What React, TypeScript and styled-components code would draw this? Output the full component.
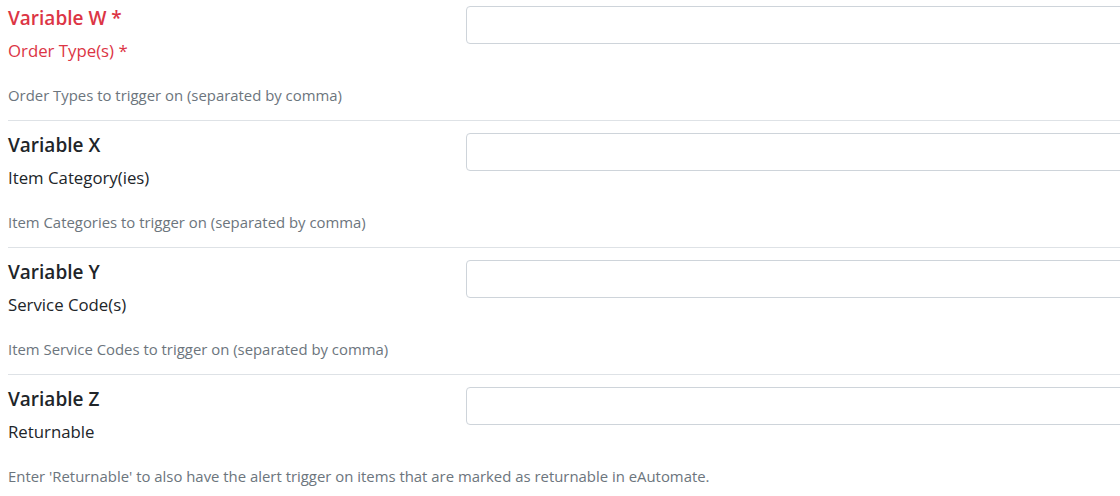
import React from "react";
import styled, { createGlobalStyle } from "styled-components";

const Global = createGlobalStyle`
  html, body { margin: 0; padding: 0; background: #fff; overflow: hidden; }
  body { font-family: "Open Sans", "Noto Sans", sans-serif; color: #212529; }
`;

const Page = styled.div`
  width: 1300px;
  padding: 0 8px;
`;

const Row = styled.section<{ $first?: boolean }>`
  display: grid;
  grid-template-columns: 458px 700px;
  align-items: start;
  padding: ${(p) => (p.$first ? "6px" : "12px")} 0 14px;
  border-bottom: 1px solid #dee2e6;
`;

const Info = styled.div`
  display: flex;
  flex-direction: column;
`;

const Title = styled.h5<{ $required?: boolean }>`
  margin: 0 0 9px;
  font-size: 19px;
  line-height: 24px;
  font-weight: 600;
  color: ${(p) => (p.$required ? "#dc3545" : "#212529")};
`;

const Label = styled.label<{ $required?: boolean }>`
  font-size: 16.8px;
  line-height: 24px;
  margin-bottom: 22px;
  color: ${(p) => (p.$required ? "#dc3545" : "#212529")};
`;

const Help = styled.small`
  font-size: 14.9px;
  line-height: 21px;
  white-space: nowrap;
  color: #6c757d;
`;

const Input = styled.input`
  box-sizing: border-box;
  width: 100%;
  height: 38px;
  border: 1px solid #ced4da;
  border-radius: 4px;
  padding: 6px 12px;
  font-size: 16px;
  background: #fff;
  outline: none;
`;

const fields = [
  { title: "Variable W", label: "Order Type(s)", help: "Order Types to trigger on (separated by comma)", required: true },
  { title: "Variable X", label: "Item Category(ies)", help: "Item Categories to trigger on (separated by comma)" },
  { title: "Variable Y", label: "Service Code(s)", help: "Item Service Codes to trigger on (separated by comma)" },
  { title: "Variable Z", label: "Returnable", help: "Enter 'Returnable' to also have the alert trigger on items that are marked as returnable in eAutomate." },
];

export default function App() {
  return (
    <>
      <Global />
      <Page>
        {fields.map((f, i) => (
          <Row key={f.title} $first={i === 0}>
            <Info>
              <Title $required={f.required}>{f.title}{f.required ? " *" : ""}</Title>
              <Label $required={f.required}>{f.label}{f.required ? " *" : ""}</Label>
              <Help>{f.help}</Help>
            </Info>
            <Input type="text" />
          </Row>
        ))}
      </Page>
    </>
  );
}
